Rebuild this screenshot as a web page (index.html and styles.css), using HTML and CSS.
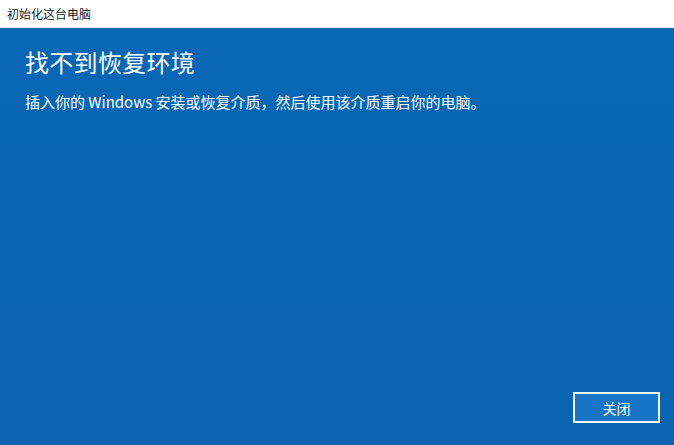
FILE: index.html
```html
<!DOCTYPE html>
<html lang="zh-CN">
<head>
  <meta charset="UTF-8" />
  <meta name="viewport" content="width=device-width, initial-scale=1" />
  <title>初始化这台电脑</title>
  <link rel="stylesheet" href="styles.css">
</head>
<body>

<header class="titlebar">初始化这台电脑</header>

<main class="panel">
  <section class="message">
    <h1>找不到恢复环境</h1>
    <p>插入你的 Windows 安装或恢复介质，然后使用该介质重启你的电脑。</p>
  </section>
  <div class="actions">
    <button type="button" class="btn">关闭</button>
  </div>
</main>

</body>
</html>
```

FILE: styles.css
```css
/* Reset */
* {
  margin: 0; padding: 0; box-sizing: border-box;
}

html, body {
  height: 100%;
}

body {
  display: flex;
  flex-direction: column;
  background: #0a65b3;
  color: white;
  font-family: "Noto Sans CJK SC", "Noto Sans", sans-serif;
  overflow: hidden;
}

/* Window title */
.titlebar {
  height: 28px;
  flex: none;
  background: #fff;
  color: #1a1a1a;
  font-size: 12px;
  line-height: 28px;
  padding-left: 7px;
  border-bottom: 1px solid #dfe8f0;
}

/* Blue dialog body */
.panel {
  flex: 1;
  display: flex;
  flex-direction: column;
  justify-content: space-between;
  background: linear-gradient(#0967b5, #0a63b0);
  padding: 16px 14px 22px 25px;
}

.message h1 {
  font-size: 24px;
  font-weight: 400;
  line-height: 36px;
  letter-spacing: 0.3px;
}

.message p {
  margin-top: 12px;
  font-size: 15px;
  line-height: 20px;
}

.actions {
  display: flex;
  justify-content: flex-end;
}

.btn {
  width: 87px;
  height: 31px;
  background: #1874c6;
  border: 2px solid #f4f8fc;
  color: white;
  font-family: inherit;
  font-size: 14px;
  cursor: pointer;
}
```
